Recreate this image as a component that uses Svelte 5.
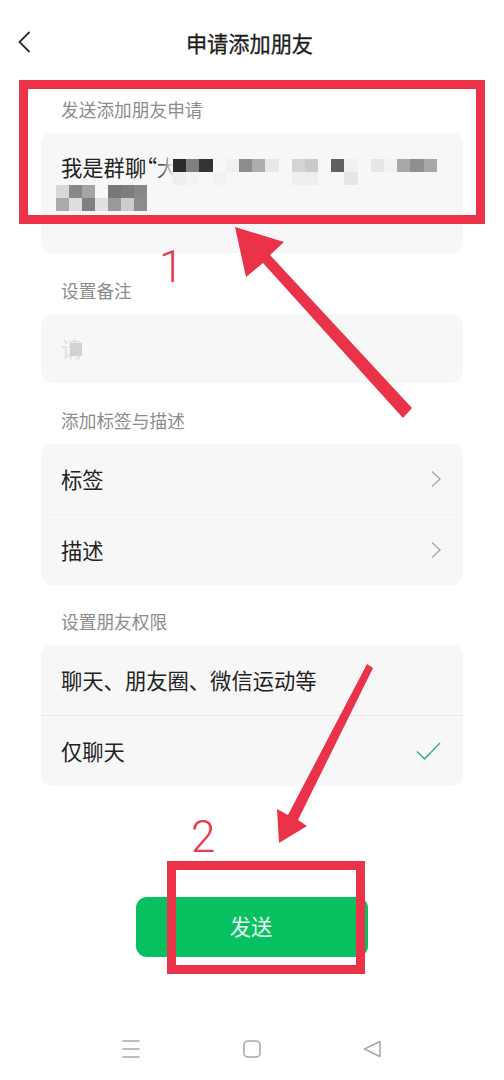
<script>
	// censored bits of the message, one colour per block ('' = let the card show through)
	const blurTop = [
		'#2b2b2b', '#808080', '#333333', '', '#f0f0f0', '#8c8c8c', '#adadad', '#e8e8e8', '', '#d4d4d4',
		'#cacaca', '', '#606060', '#f0f0f0', '', '#e6e6e6', '#f2f2f2', '#a8a8a8', '#8f8f8f', '#a8a8a8',
		'#eeeeee', '#f3f3f3', '', '#f2f2f2', '', '', '', '', '', '#eeeeee',
		'#eeeeee', '', '', '#e6e6e6', '', '', '', '', '', ''
	];
	const blurBottom = [
		'#d8d8d8', '#888888', '#a5a5a5', '', '#777777', '#7d7d7d', '#888888',
		'#aaaaaa', '#dddddd', '#808080', '#e0e0e0', '#999999', '#cccccc', '#8c8c8c'
	];
</script>

<div class="page">
	<header class="header">
		<button class="back" aria-label="返回">
			<svg width="13" height="22" viewBox="0 0 13 22" fill="none">
				<path d="M11.5 1 1.5 11l10 10" stroke="#2a2a2a" stroke-width="1.8" />
			</svg>
		</button>
		<h1>申请添加朋友</h1>
	</header>

	<section>
		<div class="label">发送添加朋友申请</div>
		<div class="card message">
			<div class="message-text">我是群聊<span class="quote">“</span><span class="faded">大</span></div>
		</div>
	</section>

	<section>
		<div class="label">设置备注</div>
		<div class="card remark"><span class="remark-text">请</span></div>
	</section>

	<section class="tight">
		<div class="label">添加标签与描述</div>
		<div class="card">
			<div class="row">
				<span>标签</span>
				<svg width="10" height="18" viewBox="0 0 10 18" fill="none">
					<path d="M1 1.500 9 9l-8 7.500" stroke="#a8a8a8" stroke-width="1.4" />
				</svg>
			</div>
			<div class="row">
				<span>描述</span>
				<svg width="10" height="18" viewBox="0 0 10 18" fill="none">
					<path d="M1 1.500 9 9l-8 7.500" stroke="#a8a8a8" stroke-width="1.4" />
				</svg>
			</div>
		</div>
	</section>

	<section>
		<div class="label">设置朋友权限</div>
		<div class="card">
			<div class="row strong-line"><span>聊天、朋友圈、微信运动等</span></div>
			<div class="row strong-line">
				<span>仅聊天</span>
				<svg width="25" height="18" viewBox="0 0 25 18" fill="none">
					<path d="M1 9.500 8.500 17 24 1" stroke="#2fb574" stroke-width="1.5" />
				</svg>
			</div>
		</div>
	</section>

	<button class="send">发送</button>

	<nav class="nav">
		<svg width="18" height="18" viewBox="0 0 18 18" fill="none">
			<path d="M0.500 1h17M0.500 9h17M0.500 17h17" stroke="#a9a9a9" stroke-width="1.6" />
		</svg>
		<svg width="18" height="18" viewBox="0 0 18 18" fill="none">
			<rect x="1" y="1" width="16" height="16" rx="4" stroke="#a9a9a9" stroke-width="1.6" />
		</svg>
		<svg width="18" height="18" viewBox="0 0 18 18" fill="none">
			<path d="M17 1.500v15L1.500 9z" stroke="#a9a9a9" stroke-width="1.6" stroke-linejoin="round" />
		</svg>
	</nav>

	<!-- mosaic over the message -->
	<div class="blur blur-top">
		{#each blurTop as colour}
			<i style:background={colour || 'transparent'}></i>
		{/each}
	</div>
	<div class="blur blur-bottom">
		{#each blurBottom as colour}
			<i style:background={colour || 'transparent'}></i>
		{/each}
	</div>
	<div class="remark-block"></div>

	<!-- red annotations drawn on top of the screenshot -->
	<div class="mark mark-one"></div>
	<div class="mark mark-two"></div>
	<svg class="arrows" width="504" height="1080" viewBox="0 0 504 1080">
		<path d="M235 227 284 242 270 255 412 408 403 418 263 263 246 277z" fill="#ea3349" />
		<path d="M279 843 277 809 288 815 367 664 373 668 298 820 307 826z" fill="#ea3349" />
	</svg>
	<span class="num num-one">1</span>
	<span class="num num-two">2</span>
</div>

<style>
	:global(body) {
		margin: 0;
		background: #fff;
	}

	.page {
		position: relative;
		width: 504px;
		height: 1080px;
		overflow: hidden;
		display: flex;
		flex-direction: column;
		align-items: center;
		background: #fff;
		font-family: 'Noto Sans CJK SC', 'Noto Sans', sans-serif;
		color: #222;
	}

	.header {
		position: relative;
		width: 100%;
		height: 86px;
		margin-bottom: 12px;
		display: flex;
		align-items: center;
		justify-content: center;
	}

	.header h1 {
		margin: 0 5px 2px 0;
		font-size: 21.2px;
		font-weight: 400;
		color: #1c1c1c;
		-webkit-text-stroke: 0.3px #1c1c1c;
	}

	.back {
		position: absolute;
		left: 18px;
		top: 31px;
		padding: 0;
		border: none;
		background: none;
		line-height: 0;
	}

	section {
		width: 422px;
		margin-bottom: 26px;
	}

	section.tight {
		margin-bottom: 25px;
	}

	.label {
		height: 24px;
		margin-bottom: 11px;
		padding-left: 20px;
		font-size: 17.7px;
		line-height: 22px;
		color: #8c8c8c;
	}

	.card {
		border-radius: 11px;
		background: #f7f7f7;
	}

	.message {
		height: 120px;
		box-sizing: border-box;
		padding: 19px 20px 0;
	}

	.message-text {
		font-size: 21.3px;
		line-height: 30px;
		color: #222;
	}

	.quote {
		font-feature-settings: 'palt';
	}

	.faded {
		background: linear-gradient(90deg, #555 25%, #ddd 70%);
		background-clip: text;
		-webkit-background-clip: text;
		color: transparent;
	}

	.remark {
		height: 69px;
		box-sizing: border-box;
		padding: 19px 20px 0;
		font-size: 21px;
		line-height: 30px;
	}

	.remark-text {
		color: #dedede;
	}

	.row {
		height: 70px;
		box-sizing: border-box;
		padding: 0 22px 0 20px;
		display: flex;
		align-items: center;
		justify-content: space-between;
		font-size: 21.3px;
	}

	.row > span {
		margin-bottom: 2px;
	}

	.row + .row {
		height: 71px;
		border-top: 1px solid #f1f1f1;
	}

	.row + .row > span {
		margin-bottom: 1px;
	}

	.strong-line + .strong-line {
		border-top-color: #e9e9e9;
	}

	.send {
		width: 232px;
		height: 60px;
		margin-top: 85px;
		padding: 0 2px 3px 0;
		border: none;
		border-radius: 11px;
		background: #07c160;
		color: #e8fbf0;
		font: inherit;
		font-size: 21.3px;
	}

	.nav {
		position: absolute;
		left: 122px;
		right: 123px;
		top: 1040px;
		display: flex;
		justify-content: space-between;
	}

	.blur {
		position: absolute;
		display: grid;
		grid-auto-rows: 13px;
	}

	.blur-top {
		left: 173px;
		top: 159px;
		grid-template-columns: repeat(20, 13.2px);
	}

	.blur-bottom {
		left: 56px;
		top: 185px;
		grid-template-columns: repeat(7, 13px);
	}

	.remark-block {
		position: absolute;
		left: 70px;
		top: 343px;
		width: 12px;
		height: 13px;
		background: #d2d2d2;
	}

	.mark {
		position: absolute;
		box-sizing: border-box;
		border: 9px solid #ea3349;
	}

	.mark-one {
		left: 19px;
		top: 80px;
		width: 466px;
		height: 144px;
	}

	.mark-two {
		left: 167px;
		top: 861px;
		width: 198px;
		height: 113px;
		border-width: 9.500px;
	}

	.arrows {
		position: absolute;
		left: 0;
		top: 0;
	}

	.num {
		position: absolute;
		font-family: Roboto, 'Liberation Sans', sans-serif;
		font-weight: 300;
		font-size: 44px;
		line-height: 44px;
		color: #e43b50;
	}

	.num-one {
		left: 159px;
		top: 245px;
	}

	.num-two {
		left: 191px;
		top: 815px;
	}
</style>
